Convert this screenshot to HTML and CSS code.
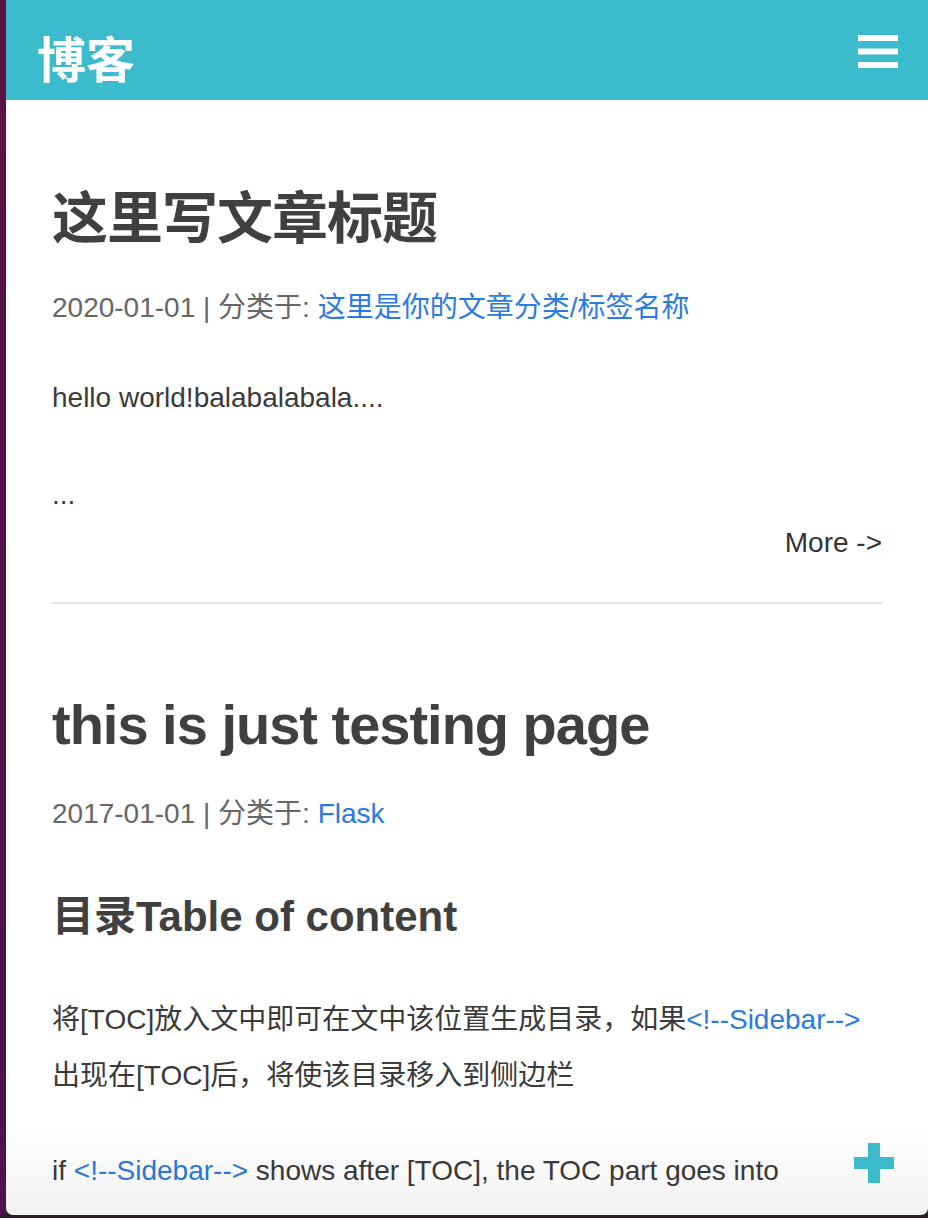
FILE: index.html
```html
<!DOCTYPE html>
<html lang="zh">
<head>
<meta charset="utf-8">
<title>博客</title>
<link rel="stylesheet" href="styles.css">
</head>
<body>
<div class="desktop">
  <div class="strip"></div>
  <div class="window">
    <header class="topbar">
      <div class="brand">博客</div>
      <svg class="menu" width="40" height="33" viewBox="0 0 40 33" aria-hidden="true">
        <rect x="0" y="0" width="40" height="6" fill="#fff"/>
        <rect x="0" y="13.5" width="40" height="6" fill="#fff"/>
        <rect x="0" y="27" width="40" height="6" fill="#fff"/>
      </svg>
    </header>
    <main class="content">
      <article class="post">
        <h1 class="post-title">这里写文章标题</h1>
        <div class="meta">2020-01-01 | 分类于: <a href="#">这里是你的文章分类/标签名称</a></div>
        <p class="text first">hello world!balabalabala....</p>
        <p class="text">...</p>
        <div class="more">More -&gt;</div>
      </article>
      <hr class="divider">
      <article class="post second">
        <h1 class="post-title">this is just testing page</h1>
        <div class="meta">2017-01-01 | 分类于: <a href="#">Flask</a></div>
        <h2 class="sub-title">目录Table of content</h2>
        <p class="text after-h2">将[TOC]放入文中即可在文中该位置生成目录，如果<a href="#">&lt;!--Sidebar--&gt;</a>出现在[TOC]后，将使该目录移入到侧边栏</p>
        <p class="text para">if <a href="#">&lt;!--Sidebar--&gt;</a> shows after [TOC], the TOC part goes into sidebar.</p>
      </article>
    </main>
    <div class="bottom-shade"></div>
    <svg class="plus" width="40" height="40" viewBox="0 0 40 40" aria-hidden="true">
      <rect x="14" y="0" width="12" height="40" fill="#3bbbcc"/>
      <rect x="0" y="14" width="40" height="12" fill="#3bbbcc"/>
    </svg>
  </div>
</div>
</body>
</html>
```
FILE: styles.css
```css
html, body {
  margin: 0;
  padding: 0;
}
body {
  background: #2b1d2a;
  font-family: "Liberation Sans", "Noto Sans CJK SC", sans-serif;
  height: 1218px;
  overflow: hidden;
}
.desktop {
  display: flex;
  height: 1215px;
}
.strip {
  width: 6px;
  flex: none;
  background: linear-gradient(to bottom, #5b1240, #4b1350);
}
.window {
  flex: 1;
  position: relative;
  background: #fff;
  overflow: hidden;
  border-radius: 0 0 7px 7px;
}
.topbar {
  height: 100px;
  background: #3bbbcc;
  display: flex;
  align-items: center;
  justify-content: space-between;
  padding: 0 30px 0 31px;
}
.brand {
  font-family: "Noto Sans CJK SC", sans-serif;
  font-weight: 700;
  font-size: 49px;
  line-height: 48px;
  color: #fff;
  margin-top: 13px;
}
.menu {
  display: block;
  margin-top: 3px;
}
.content {
  padding: 0 46px;
  color: #3a3a3a;
}
.post {
  display: flex;
  flex-direction: column;
  padding-top: 86px;
}
.post.second {
  padding-top: 88px;
}
.post-title {
  margin: 0;
  font-size: 56px;
  line-height: 66px;
  font-weight: 700;
  letter-spacing: -1px;
  color: #404040;
}
.meta {
  margin-top: 28px;
  font-size: 28px;
  line-height: 56px;
  color: #666;
}
a {
  color: #2a7ae2;
  text-decoration: none;
}
.text {
  margin: 41px 0 0;
  font-size: 28px;
  line-height: 56px;
}
.text.first {
  margin-top: 34px;
}
.text.after-h2 {
  margin-top: 50px;
}
.text.para {
  margin-top: 39px;
}
.more {
  text-align: right;
  font-size: 28px;
  line-height: 40px;
  color: #333;
}
.divider {
  border: none;
  height: 2px;
  background: #e3e3e3;
  margin: 39px 0 0;
}
.sub-title {
  margin: 50px 0 0;
  font-size: 42px;
  line-height: 50px;
  font-weight: 700;
  color: #404040;
}
.bottom-shade {
  position: absolute;
  left: 0;
  right: 0;
  bottom: 0;
  height: 90px;
  background: linear-gradient(to bottom, rgba(0,0,0,0), rgba(0,0,0,0.05));
  pointer-events: none;
}
.plus {
  position: absolute;
  right: 34px;
  bottom: 32px;
  display: block;
}
```
